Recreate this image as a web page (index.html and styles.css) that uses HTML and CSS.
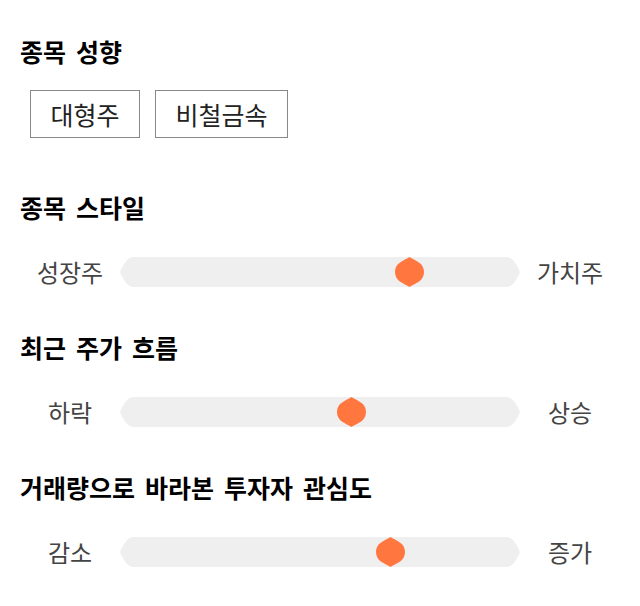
FILE: index.html
```
<!DOCTYPE html>
<html lang="ko">
<head>
<meta charset="utf-8">
<link rel="stylesheet" href="styles.css">
</head>
<body>
<main class="page">
  <section class="group">
    <h2 class="title">종목 성향</h2>
    <div class="chips">
      <span class="chip">대형주</span>
      <span class="chip">비철금속</span>
    </div>
  </section>

  <section class="group group-scale first">
    <h2 class="title">종목 스타일</h2>
    <div class="scale">
      <span class="end">성장주</span>
      <div class="track">
        <svg class="track-bg" viewBox="0 0 400 30" width="400" height="30"><path d="M14 0H386C393 0 397 8 400 15C397 22 393 30 386 30H14C7 30 3 22 0 15C3 8 7 0 14 0Z" fill="#efefef"/></svg>
        <svg class="thumb" style="left:275px" viewBox="0 0 29 30" width="29" height="30"><path d="M14.5 0C21 4 29 6 29 15C29 24 21 26 14.5 30C8 26 0 24 0 15C0 6 8 4 14.5 0Z" fill="#ff763f"/></svg>
      </div>
      <span class="end">가치주</span>
    </div>
  </section>

  <section class="group group-scale">
    <h2 class="title">최근 주가 흐름</h2>
    <div class="scale">
      <span class="end">하락</span>
      <div class="track">
        <svg class="track-bg" viewBox="0 0 400 30" width="400" height="30"><path d="M14 0H386C393 0 397 8 400 15C397 22 393 30 386 30H14C7 30 3 22 0 15C3 8 7 0 14 0Z" fill="#efefef"/></svg>
        <svg class="thumb" style="left:217px" viewBox="0 0 29 30" width="29" height="30"><path d="M14.5 0C21 4 29 6 29 15C29 24 21 26 14.5 30C8 26 0 24 0 15C0 6 8 4 14.5 0Z" fill="#ff763f"/></svg>
      </div>
      <span class="end">상승</span>
    </div>
  </section>

  <section class="group group-scale">
    <h2 class="title">거래량으로 바라본 투자자 관심도</h2>
    <div class="scale">
      <span class="end">감소</span>
      <div class="track">
        <svg class="track-bg" viewBox="0 0 400 30" width="400" height="30"><path d="M14 0H386C393 0 397 8 400 15C397 22 393 30 386 30H14C7 30 3 22 0 15C3 8 7 0 14 0Z" fill="#efefef"/></svg>
        <svg class="thumb" style="left:256px" viewBox="0 0 29 30" width="29" height="30"><path d="M14.5 0C21 4 29 6 29 15C29 24 21 26 14.5 30C8 26 0 24 0 15C0 6 8 4 14.5 0Z" fill="#ff763f"/></svg>
      </div>
      <span class="end">증가</span>
    </div>
  </section>
</main>
</body>
</html>
```

FILE: styles.css
```
* { box-sizing: border-box; }
html, body { margin: 0; padding: 0; background: #fff; }
body {
  font-family: "Noto Sans CJK KR", "Noto Sans", sans-serif;
  color: #111;
}
.page {
  width: 640px;
  padding: 36px 20px 0 20px;
}
.title {
  margin: 0;
  font-size: 25px;
  line-height: 30px;
  font-weight: 700;
  word-spacing: 3px;
  color: #000;
}
.chips {
  display: flex;
  gap: 15px;
  margin: 24px 0 0 10px;
}
.chip {
  display: flex;
  align-items: center;
  height: 48px;
  padding: 0 19.5px;
  border: 1px solid #888;
  font-size: 25px;
  color: #222;
}
.group-scale { margin-top: 45px; }
.group-scale.first { margin-top: 54px; }
.scale {
  display: flex;
  align-items: center;
  margin-top: 35px;
  margin-left: -20px;
  margin-right: -20px;
  padding: 0 20px;
}
.end {
  width: 100px;
  text-align: center;
  font-size: 24px;
  line-height: 30px;
  color: #444;
}
.track {
  position: relative;
  width: 400px;
  height: 30px;
}
.track-bg { display: block; }
.thumb {
  position: absolute;
  top: 0;
}
```
